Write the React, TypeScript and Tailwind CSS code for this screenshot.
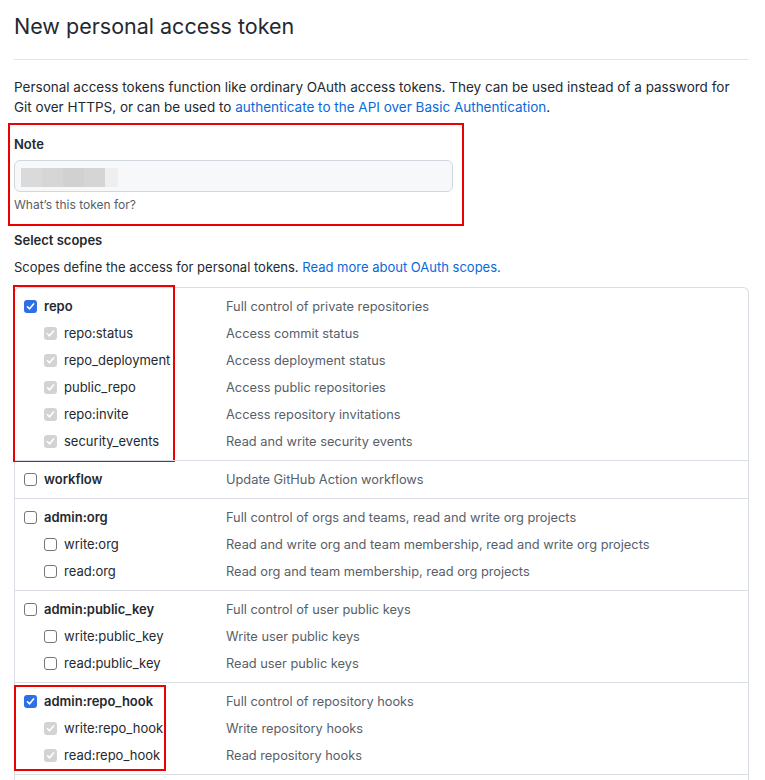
import React from 'react';

interface Scope {
    name: string;
    desc: string;
    checked?: boolean;
    children?: [string, string][];
    mark?: string;
}

const scopes: Scope[] = [
    {
        name: 'repo', desc: 'Full control of private repositories', checked: true, mark: 'repo',
        children: [
            ['repo:status', 'Access commit status'],
            ['repo_deployment', 'Access deployment status'],
            ['public_repo', 'Access public repositories'],
            ['repo:invite', 'Access repository invitations'],
            ['security_events', 'Read and write security events'],
        ],
    },
    { name: 'workflow', desc: 'Update GitHub Action workflows' },
    {
        name: 'admin:org', desc: 'Full control of orgs and teams, read and write org projects',
        children: [
            ['write:org', 'Read and write org and team membership, read and write org projects'],
            ['read:org', 'Read org and team membership, read org projects'],
        ],
    },
    {
        name: 'admin:public_key', desc: 'Full control of user public keys',
        children: [
            ['write:public_key', 'Write user public keys'],
            ['read:public_key', 'Read user public keys'],
        ],
    },
    {
        name: 'admin:repo_hook', desc: 'Full control of repository hooks', checked: true, mark: 'hook',
        children: [
            ['write:repo_hook', 'Write repository hooks'],
            ['read:repo_hook', 'Read repository hooks'],
        ],
    },
    {
        name: 'admin:org_hook', desc: 'Full control of organization hooks',
    },
];

const Check = ({ state }: { state: 'on' | 'off' | 'dim' }) => {
    if (state === 'off') {
        return <span className="w-[13px] h-[13px] shrink-0 rounded-[3px] border border-[#767676] bg-white" />;
    }
    return (
        <span className={`w-[13px] h-[13px] shrink-0 rounded-[3px] flex items-center justify-center ${state === 'on' ? 'bg-[#2f6fe4]' : 'bg-[#d3d3d3]'}`}>
            <svg width="9" height="9" viewBox="0 0 10 10" fill="none">
                <path d="M1.6 5.3 L4 7.6 L8.4 2.2" stroke="white" strokeWidth="1.8" strokeLinecap="round" strokeLinejoin="round" />
            </svg>
        </span>
    );
};

const App: React.FC = () => {
    return (
        <div className="w-[765px] bg-white pl-[14px] pb-8 text-[#24292f]" style={{ fontFamily: 'Inter, "Liberation Sans", sans-serif' }}>
            <div className="pt-[11px] pb-[18px] border-b border-[#e1e4e8] w-[734px]">
                <h1 className="text-[21.5px] leading-[30px] font-normal">New personal access token</h1>
            </div>

            <p className="mt-[17px] text-[13.5px] leading-[20px] w-[735px] whitespace-nowrap">
                Personal access tokens function like ordinary OAuth access tokens. They can be used instead of a password for<br />
                Git over HTTPS, or can be used to <span className="text-[#0969da]">authenticate to the API over Basic Authentication</span>.
            </p>

            <div className="mt-[6px] ml-[-6px] w-[456px] border-2 border-[#ee0000] pl-[4px] pr-[9px] pt-[9px] pb-[10px]">
                <div className="text-[13px] leading-[20px] font-semibold">Note</div>
                <div className="mt-[6px] h-[32px] rounded-[6px] border border-[#d0d7de] bg-[#f6f8fa] flex items-center pl-[6px]">
                    <div className="flex h-[19px] mt-[3px]">
                        <div className="w-[21px] bg-[#dadada]" />
                        <div className="w-[21px] bg-[#d6d6d6]" />
                        <div className="w-[21px] bg-[#d1d1d1]" />
                        <div className="w-[21px] bg-[#d5d5d5]" />
                        <div className="w-[13px] bg-[#efefef]" />
                    </div>
                </div>
                <div className="mt-[4px] text-[12px] leading-[18px] text-[#57606a]">What’s this token for?</div>
            </div>

            <div className="mt-[4px] text-[13px] leading-[20px] font-semibold">Select scopes</div>
            <p className="mt-[7px] text-[13px] leading-[20px]">
                Scopes define the access for personal tokens. <span className="text-[#0969da]">Read more about OAuth scopes.</span>
            </p>

            <div className="mt-[10px] w-[735px] rounded-t-[6px] border border-b-0 border-[#d8dee4] text-[13px]">
                {scopes.map((s, i) => (
                    <div key={s.name} className={`relative py-[5px] ${i > 0 ? 'border-t border-[#d8dee4]' : ''}`}>
                        <div className="flex items-center h-[27px] pl-[9px]">
                            <div className="w-[202px] flex items-center gap-[7px]">
                                <Check state={s.checked ? 'on' : 'off'} />
                                <span className="font-semibold">{s.name}</span>
                            </div>
                            <span className="text-[12.8px] text-[#57606a]">{s.desc}</span>
                        </div>
                        {s.children?.map(([n, d]) => (
                            <div key={n} className="flex items-center h-[27px] pl-[29px]">
                                <div className="w-[182px] flex items-center gap-[7px]">
                                    <Check state={s.checked ? 'dim' : 'off'} />
                                    <span>{n}</span>
                                </div>
                                <span className="text-[12.8px] text-[#57606a]">{d}</span>
                            </div>
                        ))}
                        {s.mark === 'repo' && (
                            <div className="absolute left-[-2px] top-[-3px] w-[162px] h-[177px] border-2 border-[#ee0000]" />
                        )}
                        {s.mark === 'hook' && (
                            <div className="absolute left-[-1px] top-[2px] w-[152px] h-[86px] border-2 border-[#ee0000]" />
                        )}
                    </div>
                ))}
            </div>
        </div>
    );
};

export default App;
